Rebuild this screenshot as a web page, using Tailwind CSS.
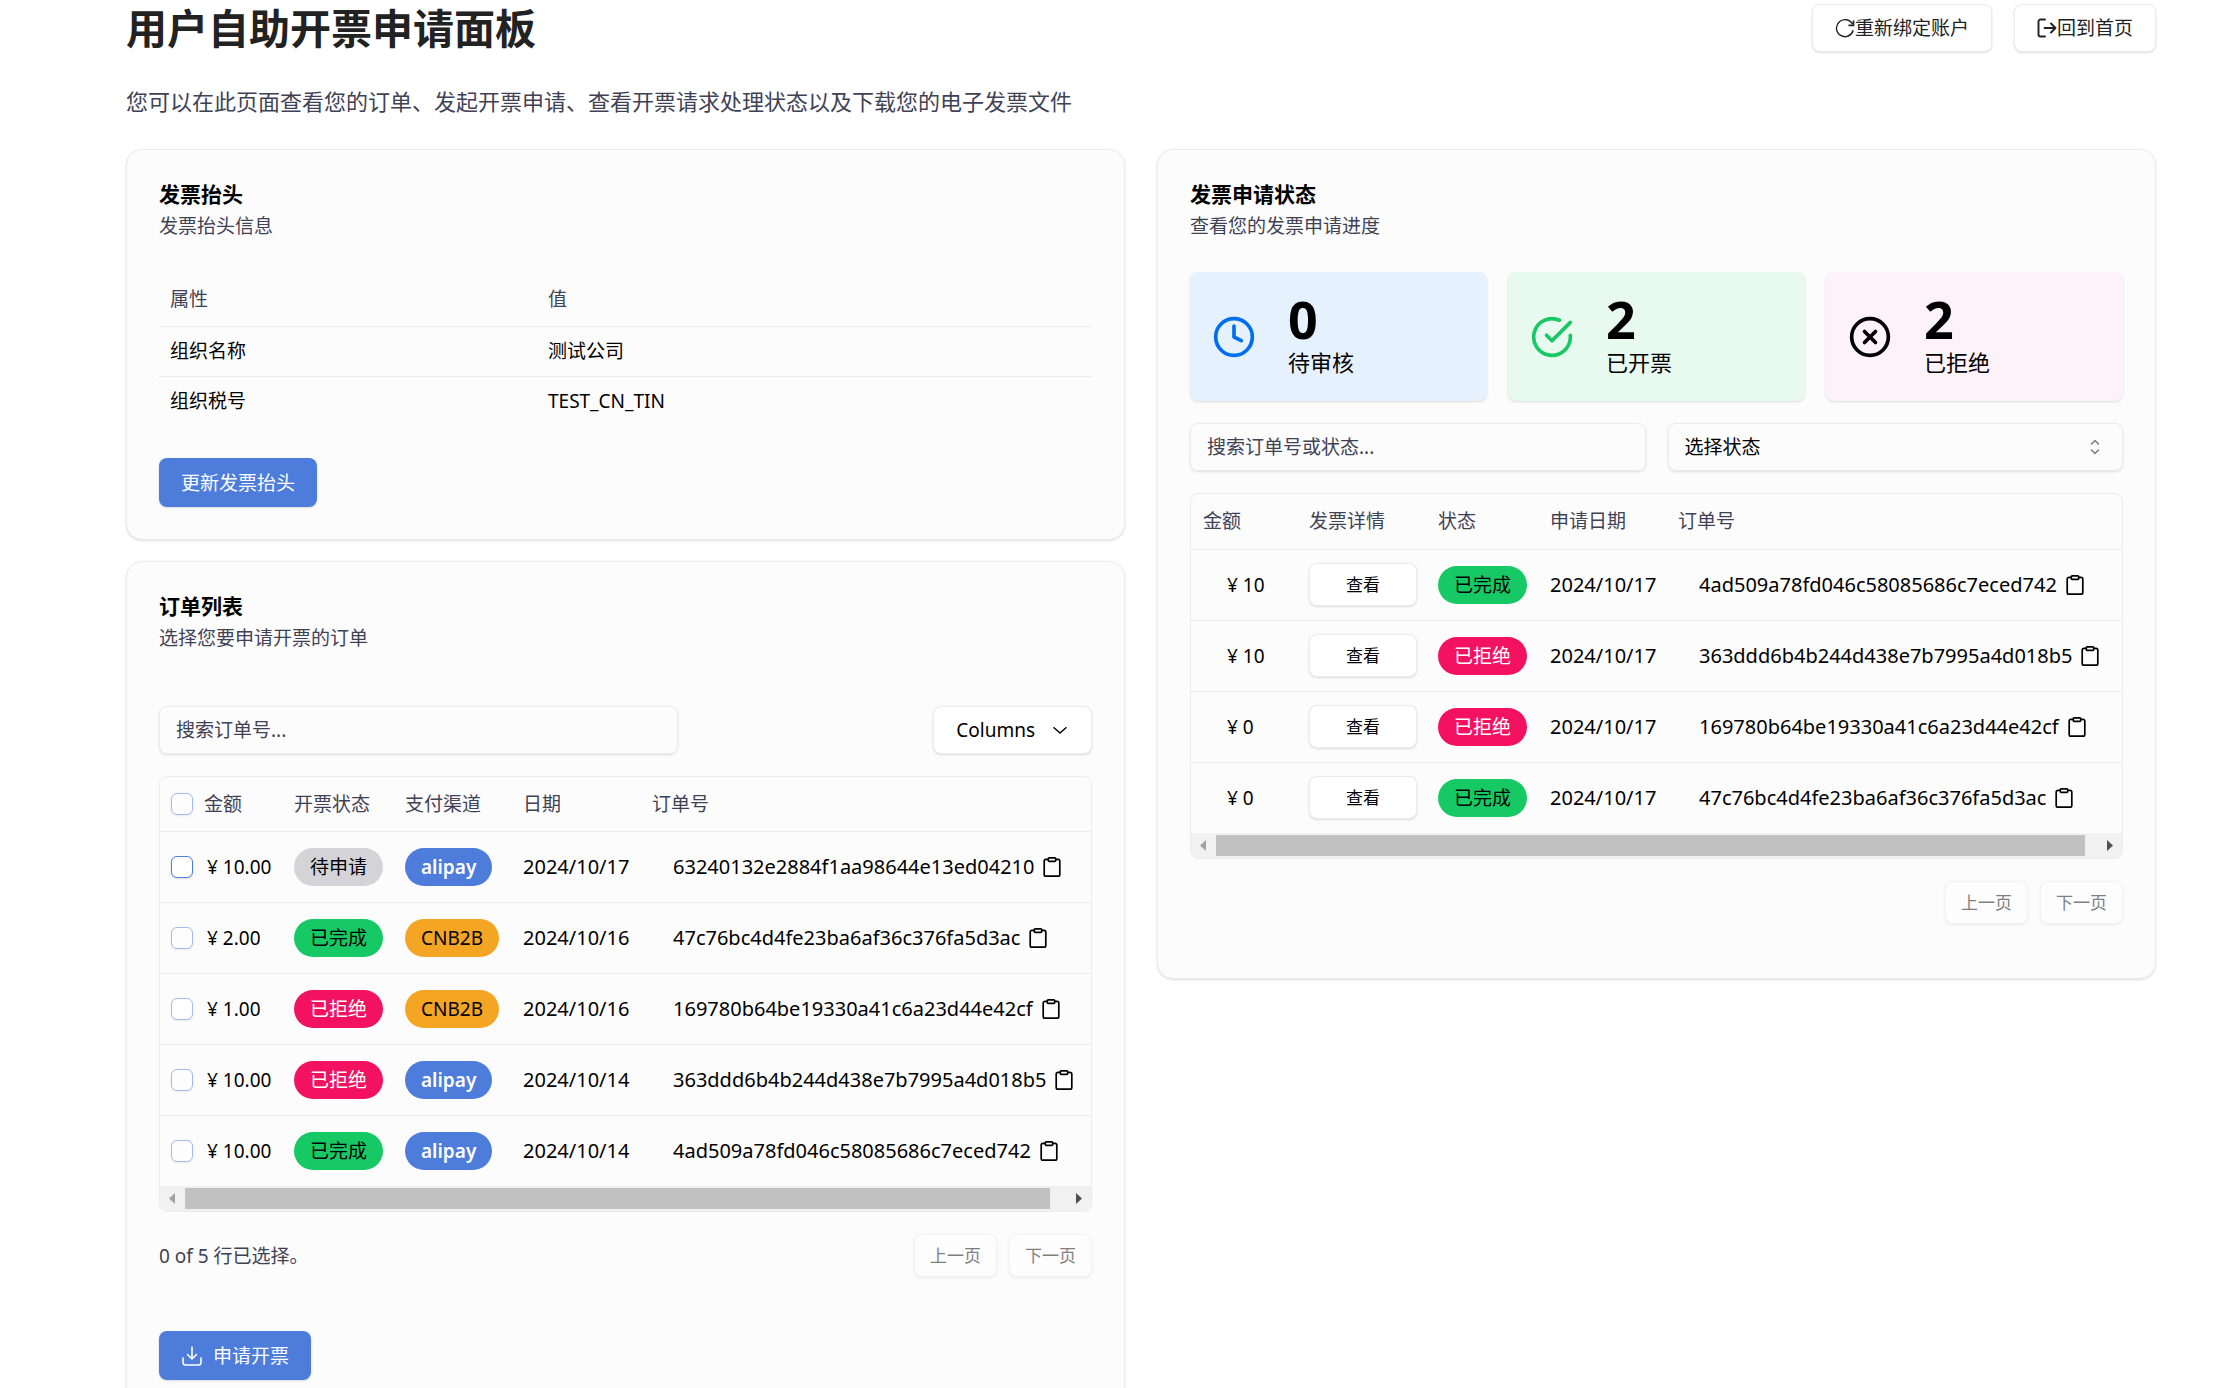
<!DOCTYPE html>
<html lang="zh-CN">
<head>
<meta charset="utf-8">
<meta name="viewport" content="width=device-width, initial-scale=1">
<title>用户自助开票申请面板</title>
<script src="https://cdn.jsdelivr.net/npm/@tailwindcss/browser@4"></script>
</head>
<body class="bg-white font-['Noto_Sans','Noto_Sans_CJK_SC',sans-serif] text-[19px] leading-7 text-black">
<svg class="hidden" aria-hidden="true">
  <symbol id="clipboard" viewBox="0 0 20 20" fill="none" stroke="currentColor" stroke-width="1.700" stroke-linejoin="round">
    <path d="M6.500 2.400H3.900A1.700 1.700 0 0 0 2.200 4.100v13.300a1.700 1.700 0 0 0 1.700 1.700h12.200a1.700 1.700 0 0 0 1.700-1.700V4.100a1.700 1.700 0 0 0-1.700-1.700h-2.600"/>
    <rect x="6.300" y="0.900" width="7.400" height="3.400" rx="0.900"/>
  </symbol>
</svg>
<div class="h-screen overflow-y-auto [scrollbar-width:none] pl-[126px] pr-[76px]">
  <header class="flex items-start justify-between pt-1">
    <h1 class="text-[41px] leading-[49px] font-bold text-[#222]">用户自助开票申请面板</h1>
    <div class="flex gap-[22px] text-[#222]">
      <button class="flex h-12 items-center rounded-lg border border-[#ececec] bg-white px-[22px] shadow-sm">
        <svg class="size-5" viewBox="0 0 20 20" fill="none" stroke="currentColor" stroke-width="1.400"><path d="M18.200 12.300A8.500 8.500 0 1 1 17.500 6.200"/><path d="M18.500 2.600v4.800h-5" stroke-width="1.700"/></svg>
        <span>重新绑定账户</span>
      </button>
      <button class="flex h-12 items-center rounded-lg border border-[#ececec] bg-white px-[22px] shadow-sm">
        <svg class="size-5" viewBox="0 0 20 20" fill="none" stroke="currentColor" stroke-width="1.900" stroke-linecap="round" stroke-linejoin="round"><path d="M8 1.500H3.500A2 2 0 0 0 1.500 3.500v13a2 2 0 0 0 2 2H8"/><path d="M7.500 10h11M14 5.500l4.500 4.500-4.500 4.500"/></svg>
        <span>回到首页</span>
      </button>
    </div>
  </header>
  <p class="mt-8 text-[22px] leading-8 text-[#3f4254]">您可以在此页面查看您的订单、发起开票申请、查看开票请求处理状态以及下载您的电子发票文件</p>

  <main class="mt-8 grid grid-cols-2 items-start gap-8">
    <div class="flex flex-col gap-[21px]">
      <section class="rounded-2xl border border-[#ececec] bg-[#fcfcfc] p-8 pt-[30px] shadow">
        <h2 class="text-[21px] leading-7 font-bold">发票抬头</h2>
        <p class="mt-1 leading-7 text-[#3f4254]">发票抬头信息</p>
        <table class="mt-8 w-full table-fixed text-left">
          <colgroup><col class="w-[378px]"><col></colgroup>
          <thead><tr class="h-[54px] border-b border-[#ececec] text-[#3f4254]"><th class="px-[11px] font-normal">属性</th><th class="px-[11px] font-normal">值</th></tr></thead>
          <tbody>
            <tr class="h-[50px] border-b border-[#ececec]"><td class="px-[11px]">组织名称</td><td class="px-[11px]">测试公司</td></tr>
            <tr class="h-[50px]"><td class="px-[11px]">组织税号</td><td class="px-[11px]">TEST_CN_TIN</td></tr>
          </tbody>
        </table>
        <button class="mt-8 h-[49px] rounded-lg bg-[#4d7cdb] px-[22px] text-white shadow">更新发票抬头</button>
      </section>

      <section class="rounded-2xl border border-[#ececec] bg-[#fcfcfc] p-8 pt-[30px] shadow">
        <h2 class="text-[21px] leading-7 font-bold">订单列表</h2>
        <p class="mt-1 leading-7 text-[#3f4254]">选择您要申请开票的订单</p>
        <div class="mt-[54px] flex items-center justify-between">
          <input type="text" aria-label="搜索订单号" placeholder="搜索订单号..." class="h-12 w-[519px] rounded-lg border border-[#ececec] px-4 shadow-sm placeholder:text-[#3f4254]">
          <button class="flex h-12 items-center gap-4 rounded-lg border border-[#ececec] bg-white px-[22px] shadow-sm">Columns
            <svg class="size-[18px]" viewBox="0 0 24 24" fill="none" stroke="currentColor" stroke-width="2" stroke-linecap="round" stroke-linejoin="round"><path d="m4 9 8 7 8-7"/></svg>
          </button>
        </div>
        <div class="mt-[22px] overflow-hidden rounded-lg border border-[#ececec]">
          <table class="w-full table-fixed text-left whitespace-nowrap">
            <colgroup><col class="w-[33px]"><col class="w-[90px]"><col class="w-[111px]"><col class="w-[118px]"><col class="w-[129px]"><col></colgroup>
            <thead><tr class="h-[54px] border-b border-[#ececec] text-[#3f4254]">
              <th class="pl-[11px]"><input type="checkbox" aria-label="全选" class="block size-[22px] appearance-none rounded-md border border-[#4d7cdb] bg-white opacity-50 shadow-sm"></th>
              <th class="pl-[11px] font-normal">金额</th><th class="pl-[11px] font-normal">开票状态</th><th class="pl-[11px] font-normal">支付渠道</th><th class="pl-[11px] font-normal">日期</th><th class="pl-[11px] font-normal">订单号</th>
            </tr></thead>
            <tbody>
              <tr class="h-[71px] border-b border-[#ececec]">
                <td class="pl-[11px]"><input type="checkbox" aria-label="选择订单" class="block size-[22px] appearance-none rounded-md border border-[#4d7cdb] bg-white shadow-sm"></td>
                <td class="pl-[14px]">¥ 10.00</td>
                <td class="pl-[11px]"><span class="inline-flex h-[38px] items-center rounded-full bg-[#d4d4d8] px-4">待申请</span></td>
                <td class="pl-[11px]"><span class="inline-flex h-[38px] items-center rounded-full bg-[#4d7cdb] px-4 font-semibold text-white">alipay</span></td>
                <td class="pl-[11px] text-[20px]">2024/10/17</td>
                <td class="pl-8"><div class="flex items-center gap-2 text-[20px]">63240132e2884f1aa98644e13ed04210<button aria-label="复制"><svg class="size-5"><use href="#clipboard"/></svg></button></div></td>
              </tr>
              <tr class="h-[71px] border-b border-[#ececec]">
                <td class="pl-[11px]"><input type="checkbox" disabled aria-label="选择订单" class="block size-[22px] appearance-none rounded-md border border-[#4d7cdb] bg-white opacity-50 shadow-sm"></td>
                <td class="pl-[14px]">¥ 2.00</td>
                <td class="pl-[11px]"><span class="inline-flex h-[38px] items-center rounded-full bg-[#17c964] px-4">已完成</span></td>
                <td class="pl-[11px]"><span class="inline-flex h-[38px] items-center rounded-full bg-[#f5a524] px-4">CNB2B</span></td>
                <td class="pl-[11px] text-[20px]">2024/10/16</td>
                <td class="pl-8"><div class="flex items-center gap-2 text-[20px]">47c76bc4d4fe23ba6af36c376fa5d3ac<button aria-label="复制"><svg class="size-5"><use href="#clipboard"/></svg></button></div></td>
              </tr>
              <tr class="h-[71px] border-b border-[#ececec]">
                <td class="pl-[11px]"><input type="checkbox" disabled aria-label="选择订单" class="block size-[22px] appearance-none rounded-md border border-[#4d7cdb] bg-white opacity-50 shadow-sm"></td>
                <td class="pl-[14px]">¥ 1.00</td>
                <td class="pl-[11px]"><span class="inline-flex h-[38px] items-center rounded-full bg-[#f31260] px-4 text-white">已拒绝</span></td>
                <td class="pl-[11px]"><span class="inline-flex h-[38px] items-center rounded-full bg-[#f5a524] px-4">CNB2B</span></td>
                <td class="pl-[11px] text-[20px]">2024/10/16</td>
                <td class="pl-8"><div class="flex items-center gap-2 text-[20px]">169780b64be19330a41c6a23d44e42cf<button aria-label="复制"><svg class="size-5"><use href="#clipboard"/></svg></button></div></td>
              </tr>
              <tr class="h-[71px] border-b border-[#ececec]">
                <td class="pl-[11px]"><input type="checkbox" disabled aria-label="选择订单" class="block size-[22px] appearance-none rounded-md border border-[#4d7cdb] bg-white opacity-50 shadow-sm"></td>
                <td class="pl-[14px]">¥ 10.00</td>
                <td class="pl-[11px]"><span class="inline-flex h-[38px] items-center rounded-full bg-[#f31260] px-4 text-white">已拒绝</span></td>
                <td class="pl-[11px]"><span class="inline-flex h-[38px] items-center rounded-full bg-[#4d7cdb] px-4 font-semibold text-white">alipay</span></td>
                <td class="pl-[11px] text-[20px]">2024/10/14</td>
                <td class="pl-8"><div class="flex items-center gap-2 text-[20px]">363ddd6b4b244d438e7b7995a4d018b5<button aria-label="复制"><svg class="size-5"><use href="#clipboard"/></svg></button></div></td>
              </tr>
              <tr class="h-[71px]">
                <td class="pl-[11px]"><input type="checkbox" disabled aria-label="选择订单" class="block size-[22px] appearance-none rounded-md border border-[#4d7cdb] bg-white opacity-50 shadow-sm"></td>
                <td class="pl-[14px]">¥ 10.00</td>
                <td class="pl-[11px]"><span class="inline-flex h-[38px] items-center rounded-full bg-[#17c964] px-4">已完成</span></td>
                <td class="pl-[11px]"><span class="inline-flex h-[38px] items-center rounded-full bg-[#4d7cdb] px-4 font-semibold text-white">alipay</span></td>
                <td class="pl-[11px] text-[20px]">2024/10/14</td>
                <td class="pl-8"><div class="flex items-center gap-2 text-[20px]">4ad509a78fd046c58085686c7eced742<button aria-label="复制"><svg class="size-5"><use href="#clipboard"/></svg></button></div></td>
              </tr>
            </tbody>
          </table>
          <div class="flex h-[25px] items-center bg-[#f1f1f1]" aria-hidden="true">
            <svg class="h-[25px] w-[25px]" viewBox="0 0 25 25" fill="#a3a3a3"><path d="M9 12.500 15 7v11z"/></svg>
            <div class="h-[21px] grow bg-[#c1c1c1]"></div>
            <svg class="ml-4 h-[25px] w-[25px]" viewBox="0 0 25 25" fill="#505050"><path d="M16 12.500 10 7v11z"/></svg>
          </div>
        </div>
        <div class="mt-[22px] flex items-center gap-3">
          <p class="grow text-[#3f4254]">0 of 5 行已选择。</p>
          <button disabled class="h-[43px] rounded-lg border border-[#ececec] bg-white px-[15px] text-[17px] opacity-50 shadow-sm">上一页</button>
          <button disabled class="h-[43px] rounded-lg border border-[#ececec] bg-white px-[15px] text-[17px] opacity-50 shadow-sm">下一页</button>
        </div>
        <button class="mt-[54px] flex h-[49px] items-center gap-[10px] rounded-lg bg-[#4d7cdb] px-[22px] text-white shadow">
          <svg class="size-[22px]" viewBox="0 0 22 22" fill="none" stroke="currentColor" stroke-width="1.600" stroke-linecap="round" stroke-linejoin="round"><path d="M2 13v4.500A2.500 2.500 0 0 0 4.500 20h13a2.500 2.500 0 0 0 2.500-2.500V13M11 2v12M6.500 9.500 11 14l4.500-4.500"/></svg>
          申请开票
        </button>
      </section>
    </div>

    <section class="rounded-2xl border border-[#ececec] bg-[#fcfcfc] p-8 pt-[30px] pb-[54px] shadow">
      <h2 class="text-[21px] leading-7 font-bold">发票申请状态</h2>
      <p class="mt-1 leading-7 text-[#3f4254]">查看您的发票申请进度</p>
      <div class="mt-8 grid grid-cols-3 gap-[21px]">
        <div class="flex h-[129px] items-center gap-8 rounded-lg bg-[#e6f1fe] px-[22px] shadow">
          <svg class="size-11 shrink-0 text-[#006fee]" viewBox="0 0 24 24" fill="none" stroke="currentColor" stroke-width="2" stroke-linecap="round" stroke-linejoin="round"><circle cx="12" cy="12" r="10"/><path d="M12 6v6l4 2"/></svg>
          <div class="pb-1"><div class="text-[52px] leading-[54px] font-bold">0</div><div class="text-[22px] leading-8">待审核</div></div>
        </div>
        <div class="flex h-[129px] items-center gap-8 rounded-lg bg-[#e8faf0] px-[22px] shadow">
          <svg class="size-11 shrink-0 text-[#17c964]" viewBox="0 0 24 24" fill="none" stroke="currentColor" stroke-width="2" stroke-linecap="round" stroke-linejoin="round"><path d="M22 11.080V12a10 10 0 1 1-5.930-9.140"/><path d="M22 4 12 14.010l-3-3"/></svg>
          <div class="pb-1"><div class="text-[52px] leading-[54px] font-bold">2</div><div class="text-[22px] leading-8">已开票</div></div>
        </div>
        <div class="flex h-[129px] items-center gap-8 rounded-lg bg-[#fdf2f8] px-[22px] shadow">
          <svg class="size-11 shrink-0" viewBox="0 0 24 24" fill="none" stroke="currentColor" stroke-width="2" stroke-linecap="round" stroke-linejoin="round"><circle cx="12" cy="12" r="10"/><path d="m15 9-6 6M9 9l6 6"/></svg>
          <div class="pb-1"><div class="text-[52px] leading-[54px] font-bold">2</div><div class="text-[22px] leading-8">已拒绝</div></div>
        </div>
      </div>
      <div class="mt-[22px] grid grid-cols-2 gap-[22px]">
        <input type="text" aria-label="搜索订单号或状态" placeholder="搜索订单号或状态..." class="h-12 rounded-lg border border-[#ececec] px-4 shadow-sm placeholder:text-[#3f4254]">
        <div class="grid">
          <select aria-label="选择状态" class="col-start-1 row-start-1 h-12 appearance-none rounded-lg border border-[#ececec] px-4 shadow-sm"><option>选择状态</option></select>
          <svg class="pointer-events-none col-start-1 row-start-1 mr-[18px] size-5 self-center justify-self-end opacity-50" viewBox="0 0 20 20" fill="none" stroke="currentColor" stroke-width="1.500" stroke-linecap="round" stroke-linejoin="round"><path d="m6.500 7 3.500-3.500L13.500 7M6.500 13l3.500 3.500 3.500-3.500"/></svg>
        </div>
      </div>
      <div class="mt-[22px] overflow-hidden rounded-lg border border-[#ececec]">
        <table class="w-full table-fixed text-left whitespace-nowrap">
          <colgroup><col class="w-[107px]"><col class="w-[129px]"><col class="w-[112px]"><col class="w-[128px]"><col></colgroup>
          <thead><tr class="h-[55px] border-b border-[#ececec] text-[#3f4254]">
            <th class="pl-3 font-normal">金额</th><th class="pl-[11px] font-normal">发票详情</th><th class="pl-[11px] font-normal">状态</th><th class="pl-[11px] font-normal">申请日期</th><th class="pl-[11px] font-normal">订单号</th>
          </tr></thead>
          <tbody>
            <tr class="h-[71px] border-b border-[#ececec]">
              <td class="pl-9">¥ 10</td>
              <td class="pl-[11px]"><button class="block h-[43px] w-[108px] rounded-lg border border-[#ececec] bg-white text-[17px] shadow-sm">查看</button></td>
              <td class="pl-[11px]"><span class="inline-flex h-[38px] items-center rounded-full bg-[#17c964] px-4">已完成</span></td>
              <td class="pl-[11px] text-[20px]">2024/10/17</td>
              <td class="pl-8"><div class="flex items-center gap-2 text-[20px]">4ad509a78fd046c58085686c7eced742<button aria-label="复制"><svg class="size-5"><use href="#clipboard"/></svg></button></div></td>
            </tr>
            <tr class="h-[71px] border-b border-[#ececec]">
              <td class="pl-9">¥ 10</td>
              <td class="pl-[11px]"><button class="block h-[43px] w-[108px] rounded-lg border border-[#ececec] bg-white text-[17px] shadow-sm">查看</button></td>
              <td class="pl-[11px]"><span class="inline-flex h-[38px] items-center rounded-full bg-[#f31260] px-4 text-white">已拒绝</span></td>
              <td class="pl-[11px] text-[20px]">2024/10/17</td>
              <td class="pl-8"><div class="flex items-center gap-2 text-[20px]">363ddd6b4b244d438e7b7995a4d018b5<button aria-label="复制"><svg class="size-5"><use href="#clipboard"/></svg></button></div></td>
            </tr>
            <tr class="h-[71px] border-b border-[#ececec]">
              <td class="pl-9">¥ 0</td>
              <td class="pl-[11px]"><button class="block h-[43px] w-[108px] rounded-lg border border-[#ececec] bg-white text-[17px] shadow-sm">查看</button></td>
              <td class="pl-[11px]"><span class="inline-flex h-[38px] items-center rounded-full bg-[#f31260] px-4 text-white">已拒绝</span></td>
              <td class="pl-[11px] text-[20px]">2024/10/17</td>
              <td class="pl-8"><div class="flex items-center gap-2 text-[20px]">169780b64be19330a41c6a23d44e42cf<button aria-label="复制"><svg class="size-5"><use href="#clipboard"/></svg></button></div></td>
            </tr>
            <tr class="h-[71px]">
              <td class="pl-9">¥ 0</td>
              <td class="pl-[11px]"><button class="block h-[43px] w-[108px] rounded-lg border border-[#ececec] bg-white text-[17px] shadow-sm">查看</button></td>
              <td class="pl-[11px]"><span class="inline-flex h-[38px] items-center rounded-full bg-[#17c964] px-4">已完成</span></td>
              <td class="pl-[11px] text-[20px]">2024/10/17</td>
              <td class="pl-8"><div class="flex items-center gap-2 text-[20px]">47c76bc4d4fe23ba6af36c376fa5d3ac<button aria-label="复制"><svg class="size-5"><use href="#clipboard"/></svg></button></div></td>
            </tr>
          </tbody>
        </table>
        <div class="flex h-[25px] items-center bg-[#f1f1f1]" aria-hidden="true">
          <svg class="h-[25px] w-[25px]" viewBox="0 0 25 25" fill="#a3a3a3"><path d="M9 12.500 15 7v11z"/></svg>
          <div class="h-[21px] grow bg-[#c1c1c1]"></div>
          <svg class="ml-3 h-[25px] w-[25px]" viewBox="0 0 25 25" fill="#505050"><path d="M16 12.500 10 7v11z"/></svg>
        </div>
      </div>
      <div class="mt-[22px] flex justify-end gap-3">
        <button disabled class="h-[43px] rounded-lg border border-[#ececec] bg-white px-[15px] text-[17px] opacity-50 shadow-sm">上一页</button>
        <button disabled class="h-[43px] rounded-lg border border-[#ececec] bg-white px-[15px] text-[17px] opacity-50 shadow-sm">下一页</button>
      </div>
    </section>
  </main>
</div>
</body>
</html>
